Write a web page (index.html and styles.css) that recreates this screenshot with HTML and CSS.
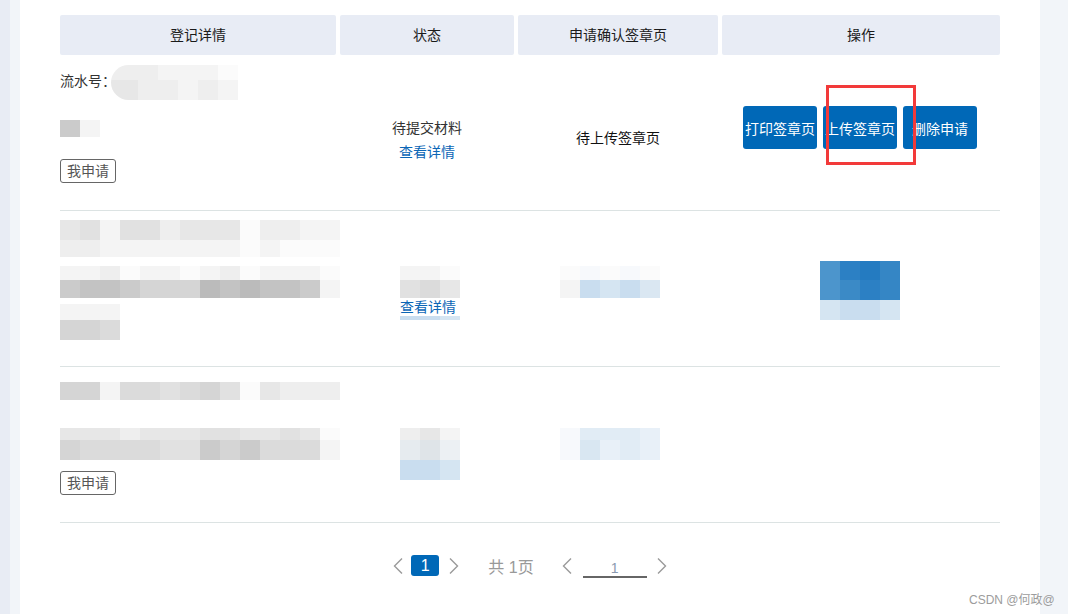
FILE: index.html
```html
<!DOCTYPE html>
<html lang="zh-CN">
<head>
    <meta charset="UTF-8">
    <title>我的申请</title>
    <link rel="stylesheet" href="styles.css">
</head>
<body>
<div class="page">
    <div class="side-a"></div>
    <div class="side-b"></div>
    <div class="main">
        <div class="grid thead">
            <div class="th">登记详情</div>
            <div class="th">状态</div>
            <div class="th">申请确认签章页</div>
            <div class="th">操作</div>
        </div>

        <!-- row 1 -->
        <div class="grid row">
            <div class="cell c-info r1">
                <div class="serial">
                    <span>流水号：</span>
                    <div class="blur">
                        <div class="strip h15"><i class="w27 s2"></i><i class="s2"></i><i class="s1"></i><i class="s1"></i><i class="s1"></i><i class="s0"></i></div>
                        <div class="strip h20"><i class="w27 s3"></i><i class="s2"></i><i class="s2"></i><i class="s1"></i><i class="s2"></i><i class="s1"></i></div>
                    </div>
                </div>
                <div class="strip h17 mt20"><i class="s7"></i><i class="s1"></i></div>
                <span class="tag mt22">我申请</span>
            </div>
            <div class="cell c-status r1">
                <div class="status-text">待提交材料</div>
                <a class="link">查看详情</a>
            </div>
            <div class="cell c-sign r1">
                <div class="sign-text">待上传签章页</div>
            </div>
            <div class="cell c-ops r1">
                <div class="ops">
                    <button class="btn">打印签章页</button>
                    <button class="btn">上传签章页</button>
                    <button class="btn">删除申请</button>
                    <div class="mark"></div>
                </div>
            </div>
        </div>

        <!-- row 2 -->
        <div class="grid row">
            <div class="cell c-info r2">
                <div class="strip h20"><i class="s3"></i><i class="s4"></i><i class="s1"></i><i class="s4"></i><i class="s4"></i><i class="s2"></i><i class="s3"></i><i class="s3"></i><i class="s3"></i><i class="s0"></i><i class="s2"></i><i class="s2"></i><i class="s1"></i><i class="s1"></i></div>
                <div class="strip h17"><i class="s2"></i><i class="s2"></i><i class="s1"></i><i class="s1"></i><i class="s1"></i><i class="s1"></i><i class="s1"></i><i class="s1"></i><i class="s1"></i><i class="s0"></i><i class="s1"></i><i class="s0"></i><i class="s0"></i><i class="s0"></i></div>
                <div class="strip h14 mt9"><i class="s1"></i><i class="s1"></i><i class="s2"></i><i class="s0"></i><i class="s1"></i><i class="s1"></i><i class="s0"></i><i class="s1"></i><i class="s2"></i><i class="s0"></i><i class="s1"></i><i class="s1"></i><i class="s1"></i><i class="s0"></i></div>
                <div class="strip h18"><i class="s7"></i><i class="s8"></i><i class="s8"></i><i class="s7"></i><i class="s6"></i><i class="s6"></i><i class="s6"></i><i class="s9"></i><i class="s8"></i><i class="s9"></i><i class="s8"></i><i class="s8"></i><i class="s7"></i><i class="s1"></i></div>
                <div class="strip h16 mt6"><i class="s1"></i><i class="s1"></i><i class="s1"></i></div>
                <div class="strip h20"><i class="s6"></i><i class="s6"></i><i class="s5"></i></div>
            </div>
            <div class="cell c-status2 r2">
                <div class="strip h14"><i class="s1"></i><i class="s1"></i><i class="s0"></i></div>
                <div class="strip h18"><i class="s4"></i><i class="s5"></i><i class="s3"></i></div>
                <a class="link tight">查看详情</a>
                <div class="strip h4"><i class="b3"></i><i class="b3"></i><i class="b2"></i></div>
            </div>
            <div class="cell c-sign2 r2">
                <div class="strip h14"><i class="s0"></i><i class="b0"></i><i class="s0"></i><i class="b0"></i><i class="s0"></i></div>
                <div class="strip h18"><i class="s1"></i><i class="b3"></i><i class="b2"></i><i class="b3"></i><i class="b4"></i></div>
            </div>
            <div class="cell c-ops2 r2">
                <div class="strip h19"><i class="k1"></i><i class="k2"></i><i class="k3"></i><i class="k4"></i></div>
                <div class="strip h20"><i class="k1"></i><i class="k5"></i><i class="k2"></i><i class="k4"></i></div>
                <div class="strip h20"><i class="b2"></i><i class="b3"></i><i class="b3"></i><i class="b2"></i></div>
            </div>
        </div>

        <!-- row 3 -->
        <div class="grid row">
            <div class="cell c-info r3">
                <div class="strip h18"><i class="s6"></i><i class="s6"></i><i class="s1"></i><i class="s5"></i><i class="s5"></i><i class="s4"></i><i class="s5"></i><i class="s6"></i><i class="s4"></i><i class="s0"></i><i class="s3"></i><i class="s2"></i><i class="s2"></i><i class="s2"></i></div>
                <div class="strip h12 mt28"><i class="s3"></i><i class="s3"></i><i class="s3"></i><i class="s2"></i><i class="s3"></i><i class="s3"></i><i class="s3"></i><i class="s4"></i><i class="s4"></i><i class="s3"></i><i class="s3"></i><i class="s4"></i><i class="s3"></i><i class="s0"></i></div>
                <div class="strip h20"><i class="s6"></i><i class="s5"></i><i class="s5"></i><i class="s5"></i><i class="s5"></i><i class="s4"></i><i class="s4"></i><i class="s7"></i><i class="s6"></i><i class="s7"></i><i class="s5"></i><i class="s5"></i><i class="s5"></i><i class="s1"></i></div>
                <span class="tag mt11">我申请</span>
            </div>
            <div class="cell c-status2 r3">
                <div class="strip h12"><i class="s2"></i><i class="s3"></i><i class="s1"></i></div>
                <div class="strip h20"><i class="g1"></i><i class="g2"></i><i class="g3"></i></div>
                <div class="strip h20"><i class="b3"></i><i class="b3"></i><i class="b2"></i></div>
            </div>
            <div class="cell c-sign2 r3">
                <div class="strip h12"><i class="b0"></i><i class="b1"></i><i class="b1"></i><i class="b1"></i><i class="b5"></i></div>
                <div class="strip h20"><i class="b0"></i><i class="b6"></i><i class="b5"></i><i class="b1"></i><i class="b5"></i></div>
            </div>
            <div class="cell"></div>
        </div>

        <div class="pager">
            <svg class="chev" width="12" height="18" viewBox="0 0 12 18"><polyline points="10,1.5 2.5,9 10,16.5" fill="none" stroke="#9a9a9a" stroke-width="1.4"/></svg>
            <span class="page-num">1</span>
            <svg class="chev next" width="12" height="18" viewBox="0 0 12 18"><polyline points="2,1.5 9.5,9 2,16.5" fill="none" stroke="#9a9a9a" stroke-width="1.4"/></svg>
            <span class="total">共 1页</span>
            <svg class="chev" width="12" height="18" viewBox="0 0 12 18"><polyline points="10,1.5 2.5,9 10,16.5" fill="none" stroke="#9a9a9a" stroke-width="1.4"/></svg>
            <span class="jump">1</span>
            <svg class="chev next2" width="12" height="18" viewBox="0 0 12 18"><polyline points="2,1.5 9.5,9 2,16.5" fill="none" stroke="#9a9a9a" stroke-width="1.4"/></svg>
        </div>
    </div>
    <div class="side-r"></div>
</div>
<div class="watermark">CSDN @何政@</div>
</body>
</html>
```

FILE: styles.css
```css
* {
    box-sizing: border-box;
}

body {
    margin: 0;
    font-family: "Liberation Sans", "Noto Sans CJK SC", sans-serif;
    font-size: 14px;
    color: #333;
    background-color: #fff;
    overflow: hidden;
}

.page {
    display: flex;
    height: 614px;
}

.side-a {
    width: 10px;
    background-color: #e8ecf4;
}

.side-b {
    width: 10px;
    background-color: #f2f5f9;
}

.side-r {
    flex: 1;
    background-color: #f2f5f9;
}

.main {
    width: 1020px;
    background-color: #fff;
    padding: 15px 40px 0 40px;
}

.grid {
    display: grid;
    grid-template-columns: 276px 174px 200px 278px;
    column-gap: 4px;
    width: 940px;
}

.th {
    height: 40px;
    line-height: 40px;
    text-align: center;
    background-color: #e8ecf5;
    border-radius: 2px;
    color: #1a1a1a;
}

.row {
    height: 156px;
    border-bottom: 1px solid #dce3e3;
}

.cell {
    display: flex;
    flex-direction: column;
    align-items: flex-start;
}

/* mosaic blocks for masked data */
.strip {
    display: flex;
}

.strip i {
    display: block;
    width: 20px;
}

.strip i.w27 {
    width: 27px;
}

.h4 { height: 4px; }
.h12 { height: 12px; }
.h14 { height: 14px; }
.h15 { height: 15px; }
.h16 { height: 16px; }
.h17 { height: 17px; }
.h18 { height: 18px; }
.h19 { height: 19px; }
.h20 { height: 20px; }

.mt6 { margin-top: 6px; }
.mt9 { margin-top: 9px; }
.mt11 { margin-top: 11px; }
.mt20 { margin-top: 20px; }
.mt22 { margin-top: 22px; }
.mt28 { margin-top: 28px; }

.s0 { background-color: #fbfbfb; }
.s1 { background-color: #f4f4f4; }
.s2 { background-color: #eeeeee; }
.s3 { background-color: #e7e7e7; }
.s4 { background-color: #e1e1e1; }
.s5 { background-color: #dbdbdb; }
.s6 { background-color: #d5d5d5; }
.s7 { background-color: #cbcbcb; }
.s8 { background-color: #c3c3c3; }
.s9 { background-color: #bbbbbb; }

.b0 { background-color: #f7f9fc; }
.b1 { background-color: #e1ecf5; }
.b2 { background-color: #d5e5f2; }
.b3 { background-color: #c9ddef; }
.b4 { background-color: #dae7f2; }
.b5 { background-color: #e8f0f8; }
.b6 { background-color: #d9e7f2; }

.g1 { background-color: #e6ebef; }
.g2 { background-color: #dfe4e8; }
.g3 { background-color: #ecf0f3; }

.k1 { background-color: #4c95cc; }
.k2 { background-color: #2c80c4; }
.k3 { background-color: #247bc1; }
.k4 { background-color: #3586c5; }
.k5 { background-color: #3b8ac6; }

/* row 1 */
.r1.c-info {
    padding-top: 10px;
}

.serial {
    display: flex;
    align-items: center;
    height: 35px;
}

.serial span {
    margin-bottom: 5px;
    color: #333;
}

.blur {
    margin-left: -5px;
    border-radius: 18px 0 0 18px;
    overflow: hidden;
}

.tag {
    display: inline-block;
    height: 24px;
    line-height: 22px;
    padding: 0 6px;
    border: 1px solid #666;
    border-radius: 3px;
    color: #555;
}

.r1.c-status {
    align-items: center;
    padding-top: 61px;
}

.status-text,
.link {
    line-height: 24px;
}

.link {
    color: #0b66b6;
    cursor: pointer;
}

.link.tight {
    line-height: 18px;
}

.r1.c-sign {
    align-items: center;
    padding-top: 71px;
}

.sign-text {
    line-height: 24px;
    color: #111;
}

.r1.c-ops {
    align-items: center;
    padding-top: 51px;
}

.ops {
    position: relative;
    display: flex;
    gap: 6px;
    margin-left: -2px;
}

.btn {
    width: 74px;
    height: 43px;
    padding: 0;
    border: none;
    border-radius: 3px;
    background-color: #0068b7;
    color: #fff;
    font-family: inherit;
    font-size: 14px;
}

.mark {
    position: absolute;
    left: 83px;
    top: -21px;
    width: 90px;
    height: 80px;
    border: 3px solid #f23a3a;
}

/* rows 2 and 3 */
.r2.c-info {
    padding-top: 9px;
}

.c-status2 {
    padding-left: 60px;
}

.r2.c-status2 {
    padding-top: 55px;
}

.c-sign2 {
    padding-left: 42px;
}

.r2.c-sign2 {
    padding-top: 55px;
}

.c-ops2 {
    padding-left: 98px;
    padding-top: 50px;
}

.r3.c-info {
    padding-top: 15px;
}

.r3.c-status2,
.r3.c-sign2 {
    padding-top: 61px;
}

/* pager */
.pager {
    display: flex;
    align-items: center;
    justify-content: center;
    height: 21px;
    margin-top: 32px;
    color: #999;
    font-size: 16px;
}

.chev {
    display: block;
}

.page-num {
    width: 28px;
    height: 21px;
    line-height: 21px;
    margin-left: 7px;
    text-align: center;
    border-radius: 3px;
    background-color: #0068b7;
    color: #fff;
    font-size: 16px;
}

.chev.next {
    margin-left: 9px;
}

.total {
    margin-left: 28px;
    margin-right: 27px;
}

.jump {
    width: 64px;
    height: 22px;
    margin-left: 10px;
    margin-top: 2px;
    text-align: center;
    line-height: 24px;
    border-bottom: 2px solid #666;
    font-size: 14px;
    color: #8a9ab0;
}

.chev.next2 {
    margin-left: 9px;
}

.watermark {
    position: absolute;
    left: 969px;
    top: 590px;
    font-size: 12px;
    color: #9c9c9c;
}
```
